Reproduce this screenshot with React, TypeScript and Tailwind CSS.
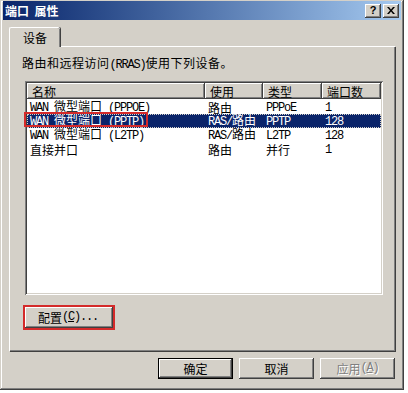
import React from 'react';

const raised =
  'shadow-[inset_-1px_-1px_#404040,inset_1px_1px_#ffffff,inset_-2px_-2px_#808080,inset_2px_2px_#d4d0c8]';

const rows = [
  { name: 'WAN 微型端口 (PPPOE)', use: '路由', type: 'PPPoE', ports: '1' },
  { name: 'WAN 微型端口 (PPTP)', use: 'RAS/路由', type: 'PPTP', ports: '128', selected: true },
  { name: 'WAN 微型端口 (L2TP)', use: 'RAS/路由', type: 'L2TP', ports: '128' },
  { name: '直接并口', use: '路由', type: '并行', ports: '1' },
];

const cols = [
  { label: '名称', w: 'w-[178px]' },
  { label: '使用', w: 'w-[58px]' },
  { label: '类型', w: 'w-[59px]' },
  { label: '端口数', w: 'w-[59px]' },
];

const mono = "font-['Liberation_Mono',monospace] text-[12px] tracking-[-1.2px]";

// half-width runs get a narrow monospace face, like the old bitmap font
function Mixed({ text }: { text: string }) {
  const parts = text.split(/([\x20-\x7e]+)/).filter(Boolean);
  return (
    <>
      {parts.map((p, i) =>
        /^[\x20-\x7e]+$/.test(p) ? (
          <span key={i} className={`${mono} whitespace-pre`}>
            {p}
          </span>
        ) : (
          <span key={i}>{p}</span>
        )
      )}
    </>
  );
}

export default function App() {
  return (
    <div className="w-[408px] h-[393px] bg-white font-['Noto_Sans_CJK_SC',sans-serif] text-[12px] leading-[13px] text-black">
      <div className="w-[404px] h-[390px] bg-[#d4d0c8] shadow-[inset_-1px_-1px_#404040,inset_1px_1px_#d4d0c8,inset_-2px_-2px_#808080,inset_2px_2px_#ffffff] px-[3px] pt-[1px] flex flex-col">
        {/* caption */}
        <div className="h-[19px] bg-linear-to-r from-[#0a246a] to-[#a6caf0] flex items-center pl-[2px] pr-[2px]">
          <span className="text-white font-bold text-[12px] leading-[14px]">端口&nbsp;&nbsp;属性</span>
          <div className="ml-auto flex items-center">
            <div className={`w-[16px] h-[14px] bg-[#d4d0c8] ${raised} flex items-center justify-center font-bold text-[11px] leading-none font-['Liberation_Sans',sans-serif]`}>
              ?
            </div>
            <div className={`ml-[2px] w-[16px] h-[14px] bg-[#d4d0c8] ${raised} flex items-center justify-center`}>
              <svg width="8" height="7" viewBox="0 0 8 7">
                <path d="M0 0h2l2 2.5L6 0h2L5 3.5 8 7H6L4 4.5 2 7H0l3-3.5z" fill="#000" />
              </svg>
            </div>
          </div>
        </div>

        {/* tab strip */}
        <div className="mt-[7px] pl-[6px] h-[20px] flex items-end">
          <div className="relative z-10 w-[51px] h-[20px] bg-[#d4d0c8] border-l border-t border-white rounded-tl-[2px] rounded-tr-[2px] shadow-[inset_-1px_0_#808080,1px_0_#404040] flex items-center justify-center pb-[1px]">
            设备
          </div>
        </div>

        {/* panel */}
        <div className="ml-[6px] w-[386px] h-[305px] -mt-px border-l border-t border-white shadow-[inset_-1px_-1px_#808080,1px_1px_#404040] flex flex-col">
          <div className="ml-[12px] mt-[9px] h-[13px] whitespace-nowrap tracking-[0.5px]">
            <Mixed text="路由和远程访问(RRAS)使用下列设备。" />
          </div>

          {/* list */}
          <div className="relative ml-[15px] mt-[12px] w-[358px] h-[214px] bg-white p-[2px] shadow-[inset_1px_1px_#808080,inset_-1px_-1px_#ffffff,inset_2px_2px_#404040,inset_-2px_-2px_#d4d0c8]">
            <div className="flex h-[16px]">
              {cols.map(c => (
                <div key={c.label} className={`${c.w} h-[16px] bg-[#d4d0c8] ${raised} pl-[5px] flex items-center`}>
                  {c.label}
                </div>
              ))}
            </div>
            <div className="pt-[1px]">
              {rows.map(r => (
                <div
                  key={r.name}
                  className={`flex h-[14px] items-center ${r.selected ? 'bg-[#0a246a] text-white outline-1 outline-dotted outline-[#d4d0c8] -outline-offset-1' : ''}`}
                >
                  <div className="w-[178px] pl-[3px] whitespace-nowrap"><Mixed text={r.name} /></div>
                  <div className="w-[58px] pl-[3px] whitespace-nowrap"><Mixed text={r.use} /></div>
                  <div className="w-[59px] pl-[3px] whitespace-nowrap"><Mixed text={r.type} /></div>
                  <div className="w-[59px] pl-[3px] whitespace-nowrap"><Mixed text={r.ports} /></div>
                </div>
              ))}
            </div>
            {/* annotation */}
            <div className="absolute left-[-1px] top-[31px] w-[124px] h-[15px] border-2 border-[#d42a2a]" />
          </div>

          {/* config button */}
          <div className="ml-[13px] mt-[10px] w-[92px] h-[25px] border-2 border-[#d42a2a]">
            <div className={`w-[88px] h-[21px] bg-[#d4d0c8] ${raised} flex items-center pl-[13px] whitespace-nowrap`}>
              配置<span className={mono}>(<span className="underline">C</span>)...</span>
            </div>
          </div>
        </div>

        {/* dialog buttons */}
        <div className="mt-[7px] pr-[6px] flex justify-end gap-[6px]">
          <div className="w-[75px] h-[21px] border border-black">
            <div className={`w-full h-full bg-[#d4d0c8] ${raised} flex items-center justify-center`}>确定</div>
          </div>
          <div className={`w-[75px] h-[21px] bg-[#d4d0c8] ${raised} flex items-center justify-center`}>取消</div>
          <div className={`w-[75px] h-[21px] bg-[#d4d0c8] ${raised} flex items-center justify-center text-[#808080] [text-shadow:1px_1px_#ffffff] whitespace-nowrap`}>
            应用<span className={mono}>(<span className="underline">A</span>)</span>
          </div>
        </div>
      </div>
    </div>
  );
}
